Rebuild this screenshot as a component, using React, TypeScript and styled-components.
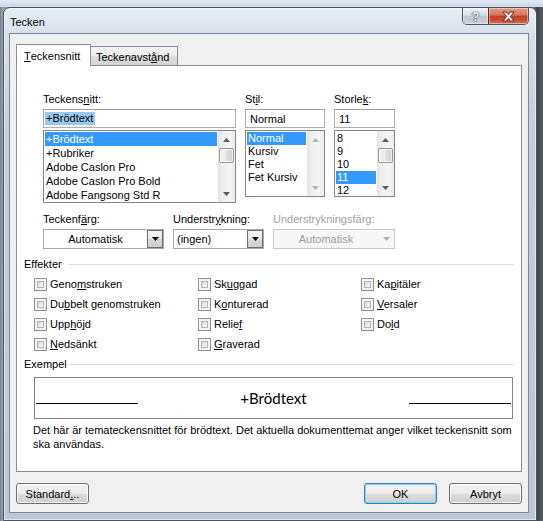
import React from 'react';
import styled, { createGlobalStyle } from 'styled-components';

const GlobalStyle = createGlobalStyle`
  html, body { margin: 0; padding: 0; width: 543px; height: 521px; overflow: hidden; }
  body { font-family: "Liberation Sans", Arial, sans-serif; font-size: 11px; color: #000; }
  * { box-sizing: border-box; }
`;

const Desktop = styled.div`
  width: 543px;
  height: 521px;
  overflow: hidden;
  display: flex;
  align-items: flex-start;
  padding: 7px 0 0 3px;
  background:
    linear-gradient(180deg, #e4ecf5 0px, #cbd8e7 7px, transparent 7px),
    linear-gradient(90deg, #7a838d 0px, #98a2ad 3px, #b9c3ce 50%, #8f98a2 530px, #3f444a 537px, #5a6067 543px);
`;

const Window = styled.div`
  width: 534px;
  height: 514px;
  flex: none;
  display: flex;
  flex-direction: column;
  border: 1px solid #4a5561;
  border-radius: 7px 7px 0 0;
  padding: 0 7px 7px 5px;
  background: linear-gradient(180deg, #e9eff6 0px, #d8e1eb 25px, #c3cedb 120px, #bcc7d4 100%);
  box-shadow: inset 0 0 0 1px rgba(255, 255, 255, 0.55);
`;

const TitleBar = styled.div`
  height: 25px;
  display: flex;
  align-items: flex-start;
  flex: none;
`;

const Title = styled.div`
  flex: 1;
  margin-top: 7px;
  padding-left: 1px;
  line-height: 14px;
  font-size: 11px;
  color: #000;
`;

const CaptionButtons = styled.div`
  display: flex;
  height: 17px;
  border: 1px solid #4f5964;
  border-top: none;
  border-radius: 0 0 5px 5px;
  overflow: hidden;
`;

const CaptionButton = styled.div<{ $close?: boolean }>`
  width: ${(p) => (p.$close ? 40 : 25)}px;
  height: 100%;
  display: flex;
  align-items: center;
  justify-content: center;
  border-left: ${(p) => (p.$close ? '1px solid #5e2a20' : 'none')};
  background: ${(p) =>
    p.$close
      ? 'linear-gradient(180deg, #e49a88 0%, #d6735d 45%, #c0412a 50%, #c94f36 80%, #dc7d63 100%)'
      : 'linear-gradient(180deg, #eef2f6 0%, #d7dee6 45%, #bfc8d2 50%, #c9d1da 100%)'};
  box-shadow: inset 0 0 0 1px rgba(255, 255, 255, 0.4);
`;

const HelpGlyph = styled.span`
  font-family: "Liberation Sans", Arial, sans-serif;
  font-weight: bold;
  font-size: 13px;
  line-height: 13px;
  color: #fff;
  text-shadow: 0 0 1px #2d3540, 0 0 1px #2d3540, 0 0 1px #2d3540;
`;

const Client = styled.div`
  flex: 1;
  display: flex;
  flex-direction: column;
  border: 1px solid #7c8896;
  background: #f0f0f0;
  padding: 10px 6px 8px 6px;
`;

const TabRow = styled.div`
  display: flex;
  align-items: flex-end;
  height: 22px;
  flex: none;
`;

const Tab = styled.div<{ $active?: boolean; $width: number; $pad: number }>`
  width: ${(p) => p.$width}px;
  height: ${(p) => (p.$active ? 22 : 20)}px;
  padding-left: ${(p) => p.$pad}px;
  display: flex;
  align-items: center;
  border: 1px solid #898c95;
  border-bottom: ${(p) => (p.$active ? 'none' : '1px solid #898c95')};
  border-left: ${(p) => (p.$active ? '1px solid #898c95' : 'none')};
  background: ${(p) =>
    p.$active ? '#fff' : 'linear-gradient(180deg, #f4f4f4 0%, #ebebeb 50%, #dedede 51%, #d3d3d3 100%)'};
  position: relative;
  z-index: ${(p) => (p.$active ? 1 : 0)};
  padding-top: ${(p) => (p.$active ? 0 : 1)}px;
`;

const Panel = styled.div`
  height: 407px;
  flex: none;
  margin-top: -1px;
  background: #fff;
  border: 1px solid #898c95;
  padding-top: 25px;
  display: flex;
  flex-direction: column;
`;

const Mnemonic = styled.span`
  text-decoration: underline;
`;

const u = (text: string, i: number) => (
  <>
    {text.slice(0, i)}
    <Mnemonic>{text[i]}</Mnemonic>
    {text.slice(i + 1)}
  </>
);

const PickerRow = styled.div`
  display: flex;
  align-items: flex-start;
  gap: 9px;
  padding-left: 26px;
`;

const Field = styled.div<{ $width: number }>`
  width: ${(p) => p.$width}px;
  display: flex;
  flex-direction: column;
`;

const Label = styled.div<{ $disabled?: boolean }>`
  height: 16px;
  line-height: 16px;
  margin-bottom: 2px;
  white-space: nowrap;
  color: ${(p) => (p.$disabled ? '#a0a0a0' : '#000')};
`;

const TextBox = styled.div`
  height: 19px;
  border: 1px solid #abadb3;
  border-top-color: #a0a3aa;
  background: #fff;
  padding-left: 1px;
  display: flex;
  align-items: center;
  white-space: nowrap;
`;

const SelectedText = styled.span`
  display: inline-block;
  line-height: 13px;
  padding: 0 2px 0 1px;
  background: #99c9ef;
`;

const ListBox = styled.div<{ $height: number }>`
  margin-top: 2px;
  height: ${(p) => p.$height}px;
  border: 1px solid #828790;
  background: #fff;
  display: flex;
`;

const Items = styled.div`
  flex: 1;
  padding: 1px 1px 0 1px;
  overflow: hidden;
`;

const Item = styled.div<{ $h: number; $selected?: boolean }>`
  height: ${(p) => p.$h}px;
  line-height: ${(p) => p.$h}px;
  padding-left: 1px;
  white-space: nowrap;
  background: ${(p) => (p.$selected ? '#3399ff' : 'transparent')};
  color: ${(p) => (p.$selected ? '#fff' : '#000')};
`;

const ScrollBar = styled.div`
  width: 17px;
  display: flex;
  flex-direction: column;
  background: linear-gradient(90deg, #e3e3e3 0%, #eeeeee 25%, #f5f5f5 70%, #ebebeb 100%);
`;

const ScrollArrow = styled.div`
  height: 17px;
  flex: none;
  display: flex;
  align-items: center;
  justify-content: center;
`;

const ScrollSpace = styled.div`
  flex: 1;
`;

const Thumb = styled.div`
  height: 15px;
  margin: 0 1px;
  border: 1px solid #979797;
  border-radius: 2px;
  background: linear-gradient(90deg, #f2f2f2 0%, #ebebeb 45%, #dcdcdc 55%, #d2d2d2 100%);
  box-shadow: inset 0 0 0 1px rgba(255, 255, 255, 0.7);
`;

const Arrow = ({ up, color }: { up?: boolean; color: string }) => (
  <svg width="7" height="4" viewBox="0 0 7 4">
    <path d={up ? 'M0 4 L3.5 0 L7 4 Z' : 'M0 0 L3.5 4 L7 0 Z'} fill={color} />
  </svg>
);

const Scroller = ({ thumb, disabled }: { thumb?: boolean; disabled?: boolean }) => {
  const c = disabled ? '#b4b4b4' : '#5a5a5a';
  return (
    <ScrollBar>
      <ScrollArrow>
        <Arrow up color={c} />
      </ScrollArrow>
      {thumb && <Thumb />}
      <ScrollSpace />
      <ScrollArrow>
        <Arrow color={c} />
      </ScrollArrow>
    </ScrollBar>
  );
};

const ComboRow = styled.div`
  display: flex;
  gap: 9px;
  padding-left: 26px;
  margin-top: 8px;
`;

const Combo = styled.div<{ $disabled?: boolean }>`
  height: 20px;
  display: flex;
  border: 1px solid ${(p) => (p.$disabled ? '#c9c9c9' : '#a7a9b0')};
  background: ${(p) => (p.$disabled ? '#f7f7f7' : '#fff')};
`;

const ComboText = styled.div<{ $center?: boolean; $disabled?: boolean }>`
  flex: 1;
  display: flex;
  align-items: center;
  justify-content: ${(p) => (p.$center ? 'center' : 'flex-start')};
  padding-left: ${(p) => (p.$center ? 0 : 3)}px;
  color: ${(p) => (p.$disabled ? '#9c9c9c' : '#000')};
  white-space: nowrap;
`;

const DropButton = styled.div<{ $disabled?: boolean }>`
  width: 16px;
  display: flex;
  align-items: center;
  justify-content: center;
  border: 1px solid ${(p) => (p.$disabled ? 'transparent' : '#6f6f6f')};
  background: ${(p) =>
    p.$disabled
      ? 'transparent'
      : 'linear-gradient(180deg, #f3f3f3 0%, #e9e9e9 50%, #d9d9d9 51%, #cdcdcd 100%)'};
`;

const GroupHeader = styled.div<{ $gap?: number }>`
  height: 20px;
  display: flex;
  align-items: center;
  padding: 0 7px;
  margin-top: ${(p) => p.$gap ?? 0}px;
`;

const GroupTitle = styled.div`
  width: 45px;
  white-space: nowrap;
`;

const GroupLine = styled.div`
  flex: 1;
  height: 1px;
  background: #d5dfe5;
`;

const EffectsGrid = styled.div`
  display: grid;
  grid-template-columns: 164px 163px 1fr;
  grid-auto-rows: 20px;
  padding-left: 17px;
`;

const CheckItem = styled.div`
  display: flex;
  align-items: center;
  gap: 3px;
  white-space: nowrap;
`;

const CheckBox = styled.div`
  width: 13px;
  height: 13px;
  flex: none;
  border: 1px solid #8f8f8f;
  padding: 2px;
  background: #f4f4f4;
`;

const CheckInner = styled.div`
  width: 100%;
  height: 100%;
  border: 1px solid #b2b4b8;
  background: linear-gradient(135deg, #d3d5d8 0%, #e9eaeb 50%, #fafafa 100%);
`;

const Preview = styled.div`
  height: 42px;
  margin: 3px 8px 0 17px;
  border: 1px solid #828282;
  display: flex;
  align-items: center;
  justify-content: space-between;
  padding: 0 1px;
`;

const PreviewLine = styled.div`
  width: 102px;
  height: 1px;
  margin-top: 10px;
  background: #000;
`;

const PreviewText = styled.div`
  font-family: Lato, "Liberation Sans", sans-serif;
  font-size: 15px;
`;

const Description = styled.div`
  margin: 4px 7px 0 16px;
  line-height: 14px;
`;

const ButtonRow = styled.div`
  display: flex;
  gap: 12px;
  height: 21px;
  margin-top: 11px;
  flex: none;
`;

const Spacer = styled.div`
  flex: 1;
`;

const Button = styled.div<{ $default?: boolean }>`
  width: 73px;
  height: 21px;
  display: flex;
  align-items: center;
  justify-content: center;
  border: 1px solid ${(p) => (p.$default ? '#3c7fb1' : '#707070')};
  border-radius: 3px;
  background: linear-gradient(180deg, #f2f2f2 0%, #ebebeb 50%, #dddddd 51%, #cfcfcf 100%);
  box-shadow: inset 0 0 0 1px ${(p) => (p.$default ? '#7fd3f6' : 'rgba(255,255,255,0.75)')};
`;

const fonts = ['+Brödtext', '+Rubriker', 'Adobe Caslon Pro', 'Adobe Caslon Pro Bold', 'Adobe Fangsong Std R'];
const styles = ['Normal', 'Kursiv', 'Fet', 'Fet Kursiv'];
const sizes = ['8', '9', '10', '11', '12'];

const effects: [string, number][][] = [
  [['Genomstruken', 4], ['Skuggad', 2], ['Kapitäler', 2]],
  [['Dubbelt genomstruken', 2], ['Konturerad', 1], ['Versaler', 0]],
  [['Upphöjd', 3], ['Relief', 5], ['Dold', 2]],
  [['Nedsänkt', 0], ['Graverad', 0]],
];

export default function App() {
  return (
    <>
      <GlobalStyle />
      <Desktop>
        <Window>
          <TitleBar>
            <Title>Tecken</Title>
            <CaptionButtons>
              <CaptionButton>
                <HelpGlyph>?</HelpGlyph>
              </CaptionButton>
              <CaptionButton $close>
                <svg width="13" height="11" viewBox="0 0 13 11">
                  <path
                    d="M1 1 L4.5 1 L6.5 3.5 L8.5 1 L12 1 L8.3 5.5 L12 10 L8.5 10 L6.5 7.5 L4.5 10 L1 10 L4.7 5.5 Z"
                    fill="#fff"
                    stroke="#5a1e12"
                    strokeWidth="0.9"
                    strokeLinejoin="round"
                  />
                </svg>
              </CaptionButton>
            </CaptionButtons>
          </TitleBar>
          <Client>
            <TabRow>
              <Tab $active $width={75} $pad={7}>{u('Teckensnitt', 0)}</Tab>
              <Tab $width={87} $pad={5}>{u('Teckenavstånd', 10)}</Tab>
            </TabRow>
            <Panel>
              <PickerRow>
                <Field $width={193}>
                  <Label>{u('Teckensnitt:', 7)}</Label>
                  <TextBox>
                    <SelectedText>+Brödtext</SelectedText>
                  </TextBox>
                  <ListBox $height={73}>
                    <Items>
                      {fonts.map((f, i) => (
                        <Item key={f} $h={14} $selected={i === 0}>{f}</Item>
                      ))}
                    </Items>
                    <Scroller thumb />
                  </ListBox>
                </Field>
                <Field $width={80}>
                  <Label>{u('Stil:', 2)}</Label>
                  <TextBox>&nbsp;Normal</TextBox>
                  <ListBox $height={67}>
                    <Items>
                      {styles.map((s, i) => (
                        <Item key={s} $h={13} $selected={i === 0}>{s}</Item>
                      ))}
                    </Items>
                    <Scroller disabled />
                  </ListBox>
                </Field>
                <Field $width={61}>
                  <Label>{u('Storlek:', 6)}</Label>
                  <TextBox>&nbsp;11</TextBox>
                  <ListBox $height={67}>
                    <Items>
                      {sizes.map((s) => (
                        <Item key={s} $h={13} $selected={s === '11'}>{s}</Item>
                      ))}
                    </Items>
                    <Scroller thumb />
                  </ListBox>
                </Field>
              </PickerRow>

              <ComboRow>
                <Field $width={121}>
                  <Label>{u('Teckenfärg:', 7)}</Label>
                  <Combo>
                    <ComboText $center>Automatisk</ComboText>
                    <DropButton>
                      <Arrow color="#000" />
                    </DropButton>
                  </Combo>
                </Field>
                <Field $width={91}>
                  <Label>{u('Understrykning:', 8)}</Label>
                  <Combo>
                    <ComboText>(ingen)</ComboText>
                    <DropButton>
                      <Arrow color="#000" />
                    </DropButton>
                  </Combo>
                </Field>
                <Field $width={122}>
                  <Label $disabled>Understrykningsfärg:</Label>
                  <Combo $disabled>
                    <ComboText $center $disabled>Automatisk</ComboText>
                    <DropButton $disabled>
                      <Arrow color="#b0b0b0" />
                    </DropButton>
                  </Combo>
                </Field>
              </ComboRow>

              <GroupHeader $gap={5}>
                <GroupTitle>Effekter</GroupTitle>
                <GroupLine />
              </GroupHeader>
              <EffectsGrid>
                {effects.flat().map(([label, idx]) => (
                  <CheckItem key={label}>
                    <CheckBox>
                      <CheckInner />
                    </CheckBox>
                    <span>{u(label, idx)}</span>
                  </CheckItem>
                ))}
              </EffectsGrid>

              <GroupHeader>
                <GroupTitle>Exempel</GroupTitle>
                <GroupLine />
              </GroupHeader>
              <Preview>
                <PreviewLine />
                <PreviewText>+Brödtext</PreviewText>
                <PreviewLine />
              </Preview>
              <Description>
                Det här är temateckensnittet för brödtext. Det aktuella dokumenttemat anger vilket teckensnitt som
                ska användas.
              </Description>
            </Panel>
            <ButtonRow>
              <Button>{u('Standard...', 8)}</Button>
              <Spacer />
              <Button $default>OK</Button>
              <Button>Avbryt</Button>
            </ButtonRow>
          </Client>
        </Window>
      </Desktop>
    </>
  );
}
